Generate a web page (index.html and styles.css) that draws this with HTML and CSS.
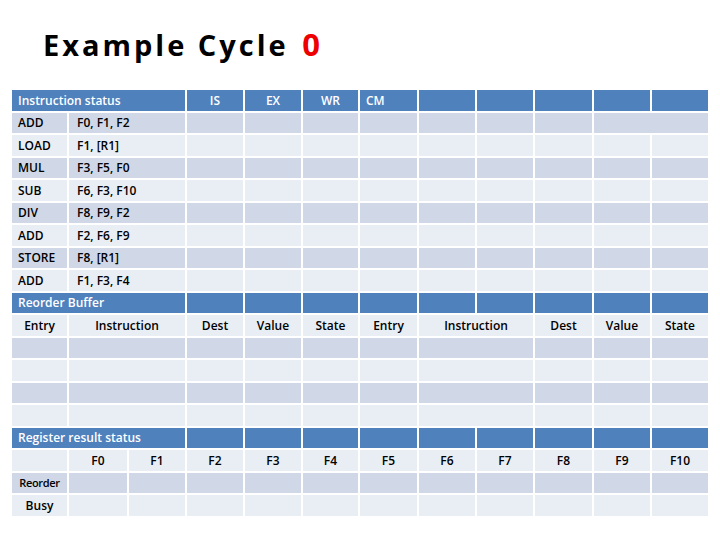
FILE: index.html
```html
<!DOCTYPE html>
<html>
<head>
<meta charset="utf-8">
<link rel="stylesheet" href="styles.css">
</head>
<body>
<div class="slide">
  <h1 class="title">Example Cycle <span class="red">0</span></h1>
  <div class="grid">
    <div class="row head">
      <div class="s3 left">Instruction status</div>
      <div>IS</div><div>EX</div><div>WR</div><div class="left">CM</div>
      <div></div><div></div><div></div><div></div><div></div>
    </div>
    <div class="row dark">
      <div class="left">ADD</div><div class="s2 left op">F0, F1, F2</div>
      <div></div><div></div><div></div><div></div><div></div><div></div><div></div><div class="s2"></div>
    </div>
    <div class="row light">
      <div class="left">LOAD</div><div class="s2 left op">F1, [R1]</div>
      <div></div><div></div><div></div><div></div><div></div><div></div><div></div><div></div><div></div>
    </div>
    <div class="row dark">
      <div class="left">MUL</div><div class="s2 left op">F3, F5, F0</div>
      <div></div><div></div><div></div><div></div><div></div><div></div><div></div><div></div><div></div>
    </div>
    <div class="row light">
      <div class="left">SUB</div><div class="s2 left op">F6, F3, F10</div>
      <div></div><div></div><div></div><div></div><div></div><div></div><div></div><div></div><div></div>
    </div>
    <div class="row dark">
      <div class="left">DIV</div><div class="s2 left op">F8, F9, F2</div>
      <div></div><div></div><div></div><div></div><div></div><div></div><div></div><div></div><div></div>
    </div>
    <div class="row light">
      <div class="left">ADD</div><div class="s2 left op">F2, F6, F9</div>
      <div></div><div></div><div></div><div></div><div></div><div></div><div></div><div></div><div></div>
    </div>
    <div class="row dark">
      <div class="left">STORE</div><div class="s2 left op">F8, [R1]</div>
      <div></div><div></div><div></div><div></div><div></div><div></div><div></div><div></div><div></div>
    </div>
    <div class="row light">
      <div class="left">ADD</div><div class="s2 left op">F1, F3, F4</div>
      <div></div><div></div><div></div><div></div><div></div><div></div><div></div><div></div><div></div>
    </div>

    <div class="row head">
      <div class="s3 left">Reorder Buffer</div>
      <div></div><div></div><div></div><div></div><div></div><div></div><div></div><div></div><div></div>
    </div>
    <div class="row light label">
      <div>Entry</div><div class="s2">Instruction</div><div>Dest</div><div>Value</div><div>State</div>
      <div>Entry</div><div class="s2">Instruction</div><div>Dest</div><div>Value</div><div>State</div>
    </div>
    <div class="row dark">
      <div></div><div class="s2"></div><div></div><div></div><div></div>
      <div></div><div class="s2"></div><div></div><div></div><div></div>
    </div>
    <div class="row light">
      <div></div><div class="s2"></div><div></div><div></div><div></div>
      <div></div><div class="s2"></div><div></div><div></div><div></div>
    </div>
    <div class="row dark">
      <div></div><div class="s2"></div><div></div><div></div><div></div>
      <div></div><div class="s2"></div><div></div><div></div><div></div>
    </div>
    <div class="row light">
      <div></div><div class="s2"></div><div></div><div></div><div></div>
      <div></div><div class="s2"></div><div></div><div></div><div></div>
    </div>

    <div class="row head">
      <div class="s3 left">Register result status</div>
      <div></div><div></div><div></div><div></div><div></div><div></div><div></div><div></div><div></div>
    </div>
    <div class="row light label">
      <div></div><div>F0</div><div>F1</div><div>F2</div><div>F3</div><div>F4</div>
      <div>F5</div><div>F6</div><div>F7</div><div>F8</div><div>F9</div><div>F10</div>
    </div>
    <div class="row dark label">
      <div class="small">Reorder</div><div></div><div></div><div></div><div></div><div></div>
      <div></div><div></div><div></div><div></div><div></div><div></div>
    </div>
    <div class="row light label">
      <div>Busy</div><div></div><div></div><div></div><div></div><div></div>
      <div></div><div></div><div></div><div></div><div></div><div></div>
    </div>
  </div>
</div>
</body>
</html>
```
FILE: styles.css
```css
html, body {
  margin: 0;
  padding: 0;
  background: #ffffff;
}
body {
  font-family: "Open Sans", "Noto Sans", sans-serif;
  color: #000000;
}
.slide {
  width: 720px;
  height: 540px;
  padding: 0 12px;
  box-sizing: border-box;
}
.title {
  margin: 0;
  height: 90px;
  box-sizing: border-box;
  padding: 26px 0 0 31px;
  font-size: 29px;
  line-height: 36px;
  font-weight: 700;
  letter-spacing: 3px;
}
.red {
  color: #ee0000;
  margin-left: 3px;
  font-size: 31px;
}
.grid {
  display: grid;
  grid-template-columns: 55px 58px 56px 56px 56px 55px 57px 56px 56px 57px 56px 56px;
  grid-auto-rows: 20.5px;
  gap: 2px;
  font-size: 12px;
  font-weight: 600;
}
.row {
  display: contents;
}
.row > div {
  display: flex;
  align-items: center;
  justify-content: center;
  white-space: nowrap;
  overflow: hidden;
}
.head > div {
  background: #4f81bd;
  color: #ffffff;
}
.dark > div {
  background: #d0d8e8;
}
.light > div {
  background: #e9edf4;
}
.row > .left {
  justify-content: flex-start;
  padding-left: 6px;
}
.row > .op {
  padding-left: 8px;
}
.s2 {
  grid-column: span 2;
}
.s3 {
  grid-column: span 3;
}
.small {
  font-size: 11px;
  letter-spacing: -0.3px;
}
```
